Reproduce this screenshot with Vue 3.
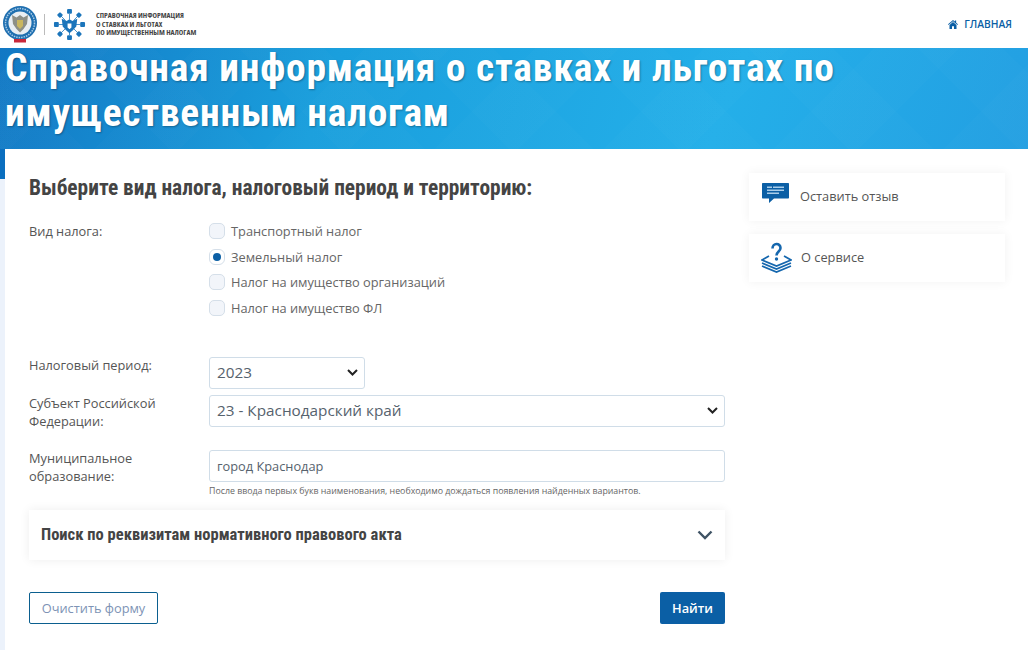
<script setup>
const taxes = [
  { id: 'transport', label: 'Транспортный налог' },
  { id: 'land', label: 'Земельный налог' },
  { id: 'org', label: 'Налог на имущество организаций' },
  { id: 'fl', label: 'Налог на имущество ФЛ' }
]
const selected = 'land'
</script>

<template>
  <div class="page">
    <header class="top">
      <div class="logos">
        <svg class="emblem" width="36" height="38" viewBox="0 0 36 38">
          <circle cx="18" cy="18" r="17" fill="#1f6fb0" />
          <circle cx="18" cy="18" r="14.500" fill="none" stroke="#a9cbe6" stroke-width="1.500" stroke-dasharray="1.500 1" />
          <circle cx="18" cy="18" r="11.500" fill="#e9eef3" />
          <path d="M10 10l4.500 2.500L18 10l3.500 2.500L26 10l-1 9-3.500 5-3.500 3.500-3.500-3.500-3.500-5z" fill="#8d8f86" />
          <path d="M15 15h6v6l-3 3-3-3z" fill="#c9b65f" />
          <rect x="12" y="34" width="12" height="3.500" fill="#c8283a" />
        </svg>
        <span class="divider"></span>
        <svg class="mark" width="33" height="33" viewBox="0 0 34 34" fill="#1b75bb">
          <path d="M17 6v6M17 22v6M6 17h6M22 17h6M8 8l5 5M26 8l-5 5M8 26l5-5M26 26l-5-5" stroke="#1b75bb" stroke-width=".8" />
          <rect x="14.500" y="1" width="5" height="5" rx="1" />
          <rect x="14.500" y="28" width="5" height="5" rx="1" />
          <rect x="1" y="14.500" width="5" height="5" rx="1" />
          <rect x="28" y="14.500" width="5" height="5" rx="1" />
          <rect x="5" y="5" width="4.500" height="4.500" rx="1" transform="rotate(45 7.200 7.200)" />
          <rect x="24.500" y="5" width="4.500" height="4.500" rx="1" transform="rotate(45 26.700 7.200)" />
          <rect x="5" y="24.500" width="4.500" height="4.500" rx="1" transform="rotate(45 7.200 26.700)" />
          <rect x="24.500" y="24.500" width="4.500" height="4.500" rx="1" transform="rotate(45 26.700 26.700)" />
          <path d="M9 11l5 2.500 3-2 3 2 5-2.500-1 8-3.500 4-3.500 3-3.500-3-3.500-4z" />
          <path d="M15 16h4v4l-2 2-2-2z" fill="#fff" />
        </svg>
        <div class="logo-text">
          <span>СПРАВОЧНАЯ ИНФОРМАЦИЯ</span>
          <span>О СТАВКАХ И ЛЬГОТАХ</span>
          <span>ПО ИМУЩЕСТВЕННЫМ НАЛОГАМ</span>
        </div>
      </div>
      <a class="home">
        <svg width="10" height="9" viewBox="0 0 11 10" fill="#0b5fa5">
          <path d="M5.500 0L0 4.800l.6.7L5.500 1.300l4.900 4.200.6-.7L9 3V.6H7.600v1.200z" />
          <path d="M5.500 2.200L1.600 5.600V10h2.800V7h2.200v3h2.800V5.600z" />
        </svg>
        ГЛАВНАЯ
      </a>
    </header>

    <section class="banner">
      <h1>Справочная информация о ставках и льготах по имущественным налогам</h1>
    </section>

    <div class="content">
      <div class="strip"></div>
      <main class="form">
        <h2>Выберите вид налога, налоговый период и территорию:</h2>

        <div class="row taxes">
          <label class="label">Вид налога:</label>
          <div class="radios">
            <div v-for="t in taxes" :key="t.id" class="radio">
              <span class="dot" :class="{ on: t.id === selected }"></span>
              {{ t.label }}
            </div>
          </div>
        </div>

        <div class="row period">
          <label class="label up">Налоговый период:</label>
          <div class="select short"><span>2023</span>
            <svg width="11" height="7" viewBox="0 0 11 7"><path d="M1 1l4.500 4.500L10 1" fill="none" stroke="#222" stroke-width="2" /></svg>
          </div>
        </div>

        <div class="row region">
          <label class="label up">Субъект Российской Федерации:</label>
          <div class="select"><span>23 - Краснодарский край</span>
            <svg width="11" height="7" viewBox="0 0 11 7"><path d="M1 1l4.500 4.500L10 1" fill="none" stroke="#222" stroke-width="2" /></svg>
          </div>
        </div>

        <div class="row city">
          <label class="label up">Муниципальное образование:</label>
          <div class="field">
            <div class="input">город Краснодар</div>
            <p class="hint">После ввода первых букв наименования, необходимо дождаться появления найденных вариантов.</p>
          </div>
        </div>

        <div class="accordion">
          <span>Поиск по реквизитам нормативного правового акта</span>
          <svg width="16" height="10" viewBox="0 0 16 10"><path d="M1.500 1.500L8 8l6.500-6.500" fill="none" stroke="#3f5364" stroke-width="2.400" /></svg>
        </div>

        <div class="actions">
          <button class="btn-clear">Очистить форму</button>
          <button class="btn-find">Найти</button>
        </div>
      </main>

      <aside class="side">
        <div class="card">
          <svg class="icon-msg" width="27" height="20" viewBox="0 0 27 20">
            <path d="M0 1C0 .4.400 0 1 0h25c.6 0 1 .4 1 1v13.500c0 .6-.4 1-1 1H12L7 20v-4.500H1c-.6 0-1-.4-1-1z" fill="#0b5fa5" />
            <path d="M5 3.500h5v1.500H5zM11 3.500h11v1.500H11zM5 6.500h17V8H5zM5 9.500h12V11H5z" fill="#a9cdea" />
          </svg>
          <span>Оставить отзыв</span>
        </div>
        <div class="card">
          <svg width="31" height="31" viewBox="0 0 31 31" fill="none" stroke="#1567ae">
            <path d="M11.500 6.500c0-6 8-6 8-.5 0 3.500-4 3.500-4 7.500" stroke-width="2.600" />
            <circle cx="15.500" cy="17" r="1.700" fill="#1567ae" stroke="none" />
            <path d="M8 14l-7 4 14.500 6L30 18l-7-4M1 21l14.500 6L30 21M1 24l14.500 6L30 24" stroke-width="1.700" />
          </svg>
          <span>О сервисе</span>
        </div>
      </aside>
    </div>
  </div>
</template>

<style scoped>
.page {
  width: 1028px;
  height: 650px;
  overflow: hidden;
  background: #fff;
  font-family: "Open Sans", sans-serif;
  color: #555;
}
.top {
  height: 48px;
  display: flex;
  align-items: center;
  justify-content: space-between;
  padding: 0 16px 0 2px;
  box-sizing: border-box;
}
.logos {
  display: flex;
  align-items: center;
}
.divider {
  width: 1px;
  height: 21px;
  background: #bbb;
  margin: 0 8px 0 6px;
}
.logo-text {
  margin-left: 10px;
  display: flex;
  flex-direction: column;
  font-family: "Open Sans", sans-serif;
  font-stretch: 75%;
  font-size: 7.600px;
  line-height: 8.800px;
  font-weight: 700;
  color: #444;
}
.home {
  display: flex;
  align-items: center;
  gap: 6px;
  font-size: 10.300px;
  font-weight: 600;
  color: #0b5fa5;
}
.banner {
  height: 101px;
  box-sizing: border-box;
  padding-left: 5px;
  background:
    repeating-linear-gradient(45deg, rgba(255,255,255,.012) 0 60px, transparent 60px 120px),
    repeating-linear-gradient(-45deg, rgba(255,255,255,.012) 0 60px, transparent 60px 120px),
    linear-gradient(110deg, #1278c4 0%, #1a9fdd 32%, #24afe9 70%, #239fe2 100%);
}
h1 {
  margin: 0;
  transform: translateY(-3px);
  width: 900px;
  font-family: "Roboto", sans-serif;
  font-stretch: 75%;
  font-size: 39.500px;
  letter-spacing: .75px;
  line-height: 45px;
  font-weight: 700;
  color: #fff;
  text-shadow: 1px 1px 2px rgba(0,0,0,.3);
}
.content {
  display: flex;
  height: 501px;
}
.strip {
  width: 5px;
  flex: none;
  background: linear-gradient(#0b6fbf 0 30px, #ecf2fb 30px);
}
.form {
  width: 696px;
  margin-left: 24px;
}
h2 {
  margin: 25px 0 0;
  font-family: "Roboto", sans-serif;
  font-stretch: 75%;
  font-size: 21.400px;
  line-height: 27px;
  font-weight: 700;
  color: #444;
}
.row {
  display: flex;
}
.label {
  width: 180px;
  flex: none;
  font-size: 12.800px;
  line-height: 18px;
  color: #555;
}
.label.up {
  margin-top: -1px;
}
.taxes {
  margin-top: 21px;
}
.radios {
  display: flex;
  flex-direction: column;
  gap: 7.600px;
}
.radio {
  display: flex;
  align-items: center;
  gap: 6px;
  height: 18px;
  font-size: 12.800px;
  color: #666;
}
.dot {
  width: 16px;
  height: 16px;
  box-sizing: border-box;
  border: 1px solid #d5dfe9;
  border-radius: 5px;
  background: #f2f5fa;
  display: flex;
  align-items: center;
  justify-content: center;
}
.dot.on {
  background: #fff;
  border-radius: 6px;
}
.dot.on::after {
  content: "";
  width: 8px;
  height: 8px;
  border-radius: 50%;
  background: #0b5fa5;
}
.period {
  margin-top: 40px;
  align-items: flex-start;
}
.select,
.input {
  box-sizing: border-box;
  height: 32px;
  border: 1px solid #d0dde8;
  border-radius: 3px;
  padding: 0 6px 0 7px;
  width: 516px;
  display: flex;
  align-items: center;
  justify-content: space-between;
  font-size: 15.300px;
  color: #56626d;
  background: #fff;
}
.select span {
  margin-top: -2px;
}
.select.short {
  width: 156px;
}
.region {
  margin-top: 6px;
  align-items: flex-start;
}
.city {
  margin-top: 20px;
}
.input {
  font-size: 12.800px;
}
.hint {
  margin: 4px 0 0;
  font-size: 8.800px;
  line-height: 11px;
  color: #666;
}
.accordion {
  margin-top: 13px;
  height: 50px;
  display: flex;
  align-items: center;
  justify-content: space-between;
  padding: 0 12px;
  box-shadow: 0 0 10px rgba(0,0,0,.07);
  font-family: "Roboto", sans-serif;
  font-stretch: 75%;
  font-size: 16.500px;
  font-weight: 700;
  color: #444;
}
.actions {
  margin-top: 32px;
  display: flex;
  justify-content: space-between;
}
.btn-clear {
  width: 129px;
  height: 32px;
  background: #fff;
  border: 1px solid #0b5f8f;
  border-radius: 2px;
  font: 12.800px "Open Sans", sans-serif;
  color: #7d93b5;
}
.btn-find {
  width: 65px;
  height: 32px;
  background: #0b5fa5;
  border: 0;
  border-radius: 2px;
  font: 600 12.800px "Open Sans", sans-serif;
  color: #fff;
}
.side {
  margin-left: 24px;
  margin-top: 24px;
  width: 256px;
  display: flex;
  flex-direction: column;
  gap: 13px;
}
.card {
  height: 48px;
  display: flex;
  align-items: center;
  gap: 11px;
  padding-left: 13px;
  padding-bottom: 2px;
  box-sizing: border-box;
  box-shadow: 0 0 10px rgba(0,0,0,.06);
  font-size: 12.800px;
  color: #555;
}
.icon-msg {
  margin-top: -7px;
}
.card:last-child {
  padding-left: 12px;
}
.card:last-child svg {
  margin-right: -2px;
}
</style>
